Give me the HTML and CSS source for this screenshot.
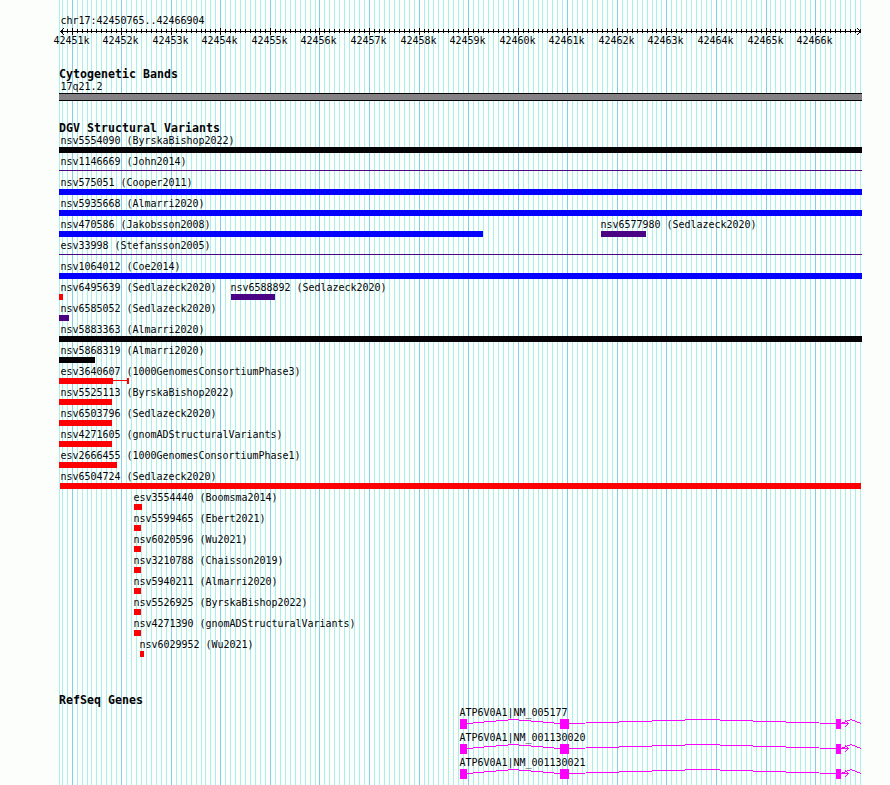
FILE: index.html
```
<!DOCTYPE html>
<html lang="en">

<head>
  <meta charset="UTF-8" />
  <title>chr17:42450765..42466904</title>
  <link rel="stylesheet" href="styles.css">
</head>

<body>
  <div class="browser">
    <svg class="gridlines" id="gridlines" width="890" height="785"></svg>

    <div class="ruler">
      <div class="label">chr17:42450765..42466904</div>
      <svg class="axis" id="axis" width="803" height="9"></svg>
      <div class="ruler-labels" id="rulerLabels"></div>
    </div>

    <div class="track cytoband">
      <h2>Cytogenetic Bands</h2>
      <div class="label">17q21.2</div>
      <div class="band"></div>
    </div>

    <div class="track variants">
      <h2>DGV Structural Variants</h2>
      <div id="variants"></div>
    </div>

    <div class="track genes">
      <h2>RefSeq Genes</h2>
      <div id="genes"></div>
    </div>
  </div>

  <script src="script.js"></script>
</body>

</html>
```
FILE: styles.css
```
* {
  box-sizing: border-box;
}

body {
  margin: 0;
  background-color: #fcfefc;
  color: #040204;
  font-family: 'DejaVu Sans Mono', monospace;
  overflow: hidden;
}

.browser {
  position: relative;
  width: 890px;
  height: 785px;
  padding: 15px 28px 0 59px;
  overflow: hidden;
}

/* lines behind all the tracks */
.gridlines {
  position: absolute;
  top: 0;
  left: 0;
  z-index: -1;
}

svg {
  display: block;
  shape-rendering: crispEdges;
  overflow: visible;
}

.label {
  height: 12px;
  margin-left: 1px;
  font-size: 10px;
  line-height: 12px;
  letter-spacing: -0.02px;
  text-indent: 0.4px;
  white-space: pre;
}

.ruler {
  height: 53px;
}

.ruler-labels {
  display: grid;
  height: 12px;
  margin-top: -1px;
}

.ruler-labels .label {
  grid-area: 1 / 1;
  width: 37px;
  text-indent: -0.4px;
}

h2 {
  height: 13px;
  margin: 0;
  font-size: 11.6px;
  line-height: 13px;
  letter-spacing: 0.017px;
  white-space: pre;
}

.cytoband {
  height: 54px;
}

.band {
  height: 8px;
  width: 803px;
  background-color: #848284;
  border: solid #040204;
  border-width: 1px 0;
}

.variants {
  height: 572px;
}

.row {
  display: grid;
  height: 21px;
}

.feature {
  grid-area: 1 / 1;
}

.bar {
  height: 6px;
}

.bar.thin {
  height: 1px;
  margin-top: 2px;
}

.black {
  background-color: #040204;
}

.blue {
  background-color: #0402fc;
}

.purple {
  background-color: #4c0284;
}

.red {
  background-color: #fc0204;
}

.gene {
  height: 25px;
}

.gene .label {
  margin-left: 400px;
}

.gene rect {
  fill: #fc02fc;
}

.gene polyline {
  fill: none;
  stroke: #fc02fc;
}
```
FILE: script.js
```
const SVG = 'http://www.w3.org/2000/svg';
const left = 59;
const end = 862;

function add(parent, tag, attrs) {
  const el = document.createElementNS(SVG, tag);
  for (const key in attrs) el.setAttribute(key, attrs[key]);
  parent.appendChild(el);
  return el;
}

// pixel of the k-th 100 bp tick, counted from 42451k
function tick(k) {
  return Math.floor(72.165 + k * 4.956);
}

const gridlines = document.getElementById('gridlines');
const axis = document.getElementById('axis');
const rulerLabels = document.getElementById('rulerLabels');

add(gridlines, 'rect', { x: left, y: 0, width: 1, height: 785, fill: '#aceeec' });
add(axis, 'rect', { x: 1, y: 4, width: 801, height: 1, fill: '#040204' });

for (let k = -2; k <= 159; k++) {
  const x = tick(k);
  const major = k % 10 === 0;
  add(gridlines, 'rect', { x, y: 0, width: 1, height: 785, fill: major ? '#84ceec' : '#aceeec' });
  add(axis, 'rect', { x: x - left, y: major ? 1 : 2, width: 1, height: major ? 7 : 4, fill: '#040204' });

  if (major) {
    const label = document.createElement('div');
    label.className = 'label';
    label.textContent = (42451 + k / 10) + 'k';
    label.style.marginLeft = (x - left - 18) + 'px';
    rulerLabels.appendChild(label);
  }
}

// arrow heads
add(axis, 'polyline', { points: '5,1 1.5,4.5 5,8', fill: 'none', stroke: '#040204' });
add(axis, 'polyline', { points: '798,1 801.5,4.5 798,8', fill: 'none', stroke: '#040204' });

// [name, colour, start, end, label x]
const variants = [
  [['nsv5554090 (ByrskaBishop2022)', 'black', 59, end]],
  [['nsv1146669 (John2014)', 'purple thin', 59, end]],
  [['nsv575051 (Cooper2011)', 'blue', 59, end]],
  [['nsv5935668 (Almarri2020)', 'blue', 59, end]],
  [['nsv470586 (Jakobsson2008)', 'blue', 59, 483], ['nsv6577980 (Sedlazeck2020)', 'purple', 601, 646, 600]],
  [['esv33998 (Stefansson2005)', 'purple thin', 59, end]],
  [['nsv1064012 (Coe2014)', 'blue', 59, end]],
  [['nsv6495639 (Sedlazeck2020)', 'red', 59, 63], ['nsv6588892 (Sedlazeck2020)', 'purple', 231, 275, 230]],
  [['nsv6585052 (Sedlazeck2020)', 'purple', 59, 69]],
  [['nsv5883363 (Almarri2020)', 'black', 59, end]],
  [['nsv5868319 (Almarri2020)', 'black', 59, 95]],
  [['esv3640607 (1000GenomesConsortiumPhase3)', 'red', 59, 113], ['', 'red thin', 113, 127], ['', 'red', 127, 129]],
  [['nsv5525113 (ByrskaBishop2022)', 'red', 59, 112]],
  [['nsv6503796 (Sedlazeck2020)', 'red', 59, 112]],
  [['nsv4271605 (gnomADStructuralVariants)', 'red', 59, 112]],
  [['esv2666455 (1000GenomesConsortiumPhase1)', 'red', 59, 117]],
  [['nsv6504724 (Sedlazeck2020)', 'red', 60, 861]],
  [['esv3554440 (Boomsma2014)', 'red', 134, 142, 133]],
  [['nsv5599465 (Ebert2021)', 'red', 134, 141, 133]],
  [['nsv6020596 (Wu2021)', 'red', 134, 141, 133]],
  [['nsv3210788 (Chaisson2019)', 'red', 134, 141, 133]],
  [['nsv5940211 (Almarri2020)', 'red', 134, 141, 133]],
  [['nsv5526925 (ByrskaBishop2022)', 'red', 134, 141, 133]],
  [['nsv4271390 (gnomADStructuralVariants)', 'red', 134, 141, 133]],
  [['nsv6029952 (Wu2021)', 'red', 140, 144, 139]]
];

document.getElementById('variants').innerHTML = variants.map(row => `
  <div class="row">
    ${row.map(([name, colour, start, stop, labelX = 60]) => `
      <div class="feature">
        <div class="label" style="margin-left: ${labelX - left}px">${name}</div>
        <div class="bar ${colour}" style="margin-left: ${start - left}px; width: ${stop - start}px"></div>
      </div>
    `).join('')}
  </div>
`).join('');

const genes = ['ATP6V0A1|NM_005177', 'ATP6V0A1|NM_001130020', 'ATP6V0A1|NM_001130021'];

genes.forEach(name => {
  const gene = document.createElement('div');
  gene.className = 'gene';
  gene.innerHTML = `<div class="label">${name}</div>`;
  const svg = add(gene, 'svg', { width: 803, height: 12 });

  // exons
  [[401, 7], [501, 9], [777, 5]].forEach(([x, width]) => {
    add(svg, 'rect', { x, y: 0, width, height: 10 });
  });

  // introns
  add(svg, 'polyline', { points: '408,4.5 454.5,0.5 501,4.5' });
  add(svg, 'polyline', { points: '510,4.5 643.5,0.5 777,4.5' });
  add(svg, 'polyline', { points: '782,4.5 792,0.5 802,4.5' });

  // strand arrow
  add(svg, 'polyline', { points: '782,4.5 789.5,4.5' });
  add(svg, 'polyline', { points: '786,1 789.5,4.5 786,8' });

  document.getElementById('genes').appendChild(gene);
});
```
